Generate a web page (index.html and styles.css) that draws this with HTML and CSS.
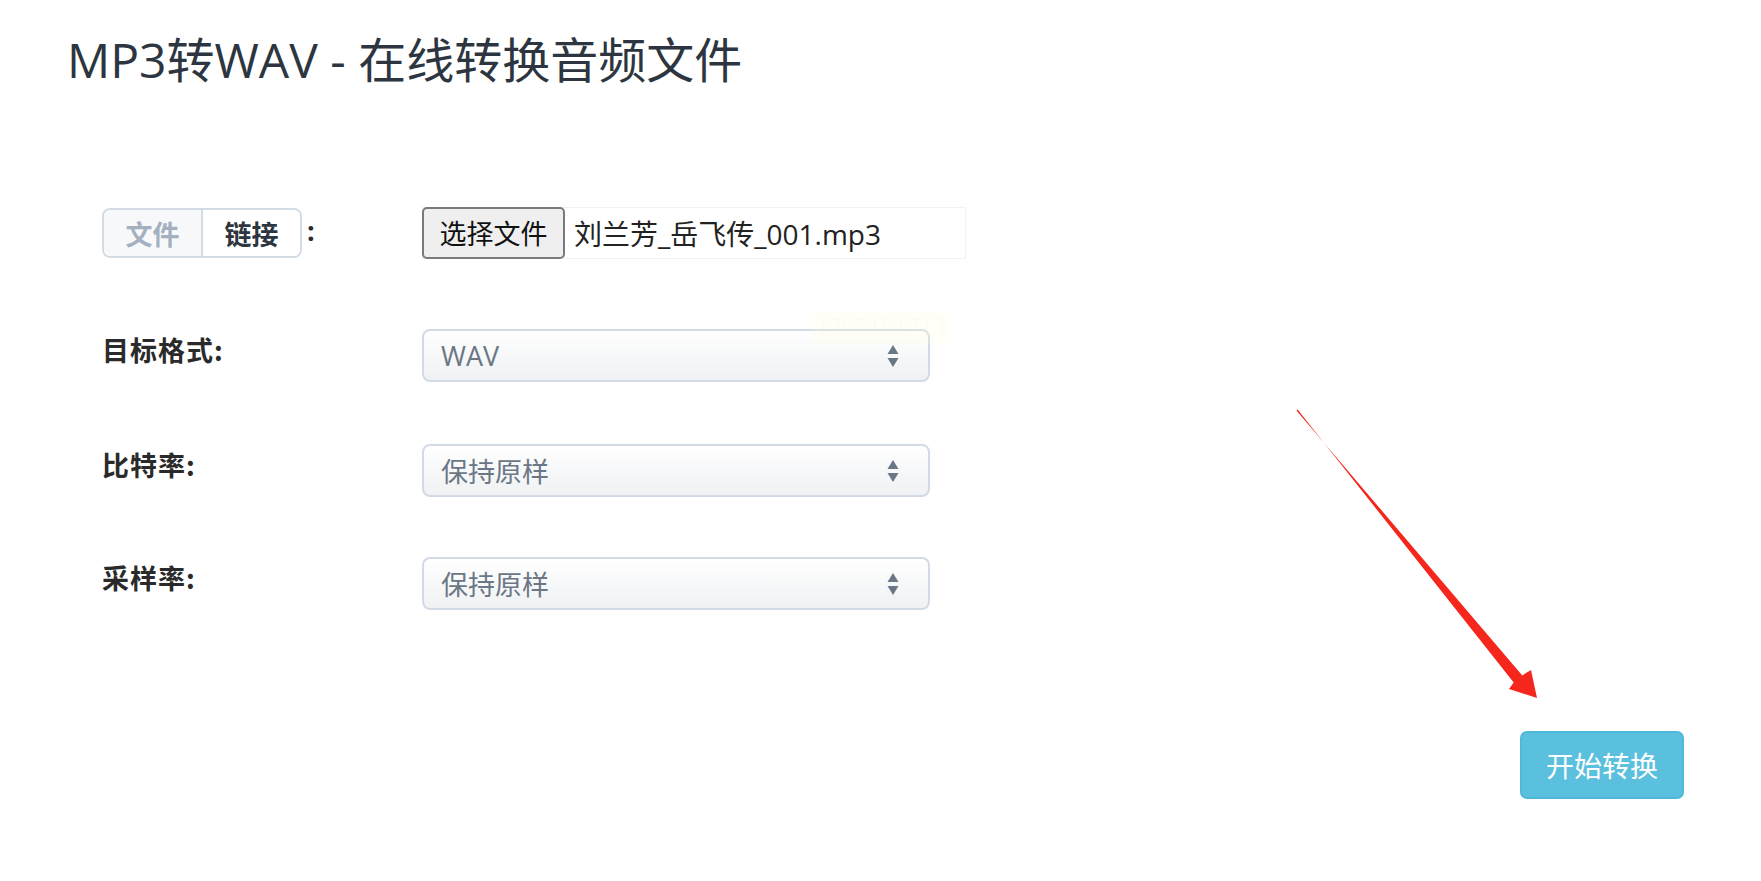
FILE: index.html
```html
<!DOCTYPE html>
<html lang="zh-CN">
<head>
<meta charset="utf-8">
<title>MP3转WAV - 在线转换音频文件</title>
<link rel="stylesheet" href="styles.css">
</head>
<body>
<div class="page">
  <h1 class="title">MP3转WAV - 在线转换音频文件</h1>

  <form class="form">
    <div class="row row-file">
      <div class="label">
        <span class="toggle"><span class="tg tg-off">文件</span><span class="tg tg-on">链接</span></span><span class="colon">:</span>
      </div>
      <div class="control">
        <div class="file">
          <span class="file-btn">选择文件</span><span class="file-name">刘兰芳_岳飞传_001.mp3</span>
        </div>
      </div>
    </div>

    <div class="row row-2">
      <div class="label"><span class="label-text">目标格式:</span></div>
      <div class="control">
        <div class="select"><span class="select-text">WAV</span><span class="caret"><svg width="14" height="24" viewBox="0 0 14 24"><path d="M7 1 L12.5 10 L1.5 10 Z" fill="#6b7785"/><path d="M7 23 L12.5 14 L1.5 14 Z" fill="#6b7785"/></svg></span></div>
      </div>
    </div>

    <div class="row row-3">
      <div class="label"><span class="label-text">比特率:</span></div>
      <div class="control">
        <div class="select"><span class="select-text">保持原样</span><span class="caret"><svg width="14" height="24" viewBox="0 0 14 24"><path d="M7 1 L12.5 10 L1.5 10 Z" fill="#6b7785"/><path d="M7 23 L12.5 14 L1.5 14 Z" fill="#6b7785"/></svg></span></div>
      </div>
    </div>

    <div class="row row-4">
      <div class="label"><span class="label-text">采样率:</span></div>
      <div class="control">
        <div class="select"><span class="select-text">保持原样</span><span class="caret"><svg width="14" height="24" viewBox="0 0 14 24"><path d="M7 1 L12.5 10 L1.5 10 Z" fill="#6b7785"/><path d="M7 23 L12.5 14 L1.5 14 Z" fill="#6b7785"/></svg></span></div>
      </div>
    </div>
  </form>

  <div class="actions">
    <button type="button" class="btn">开始转换</button>
  </div>

  <div class="watermark">1765151713</div>

  <svg class="arrow" width="1761" height="881" viewBox="0 0 1761 881">
    <polygon points="1297.6,409.5 1513.7,682.6 1509,689 1537,698 1531,670 1522.3,675.4 1296.4,410.5" fill="#f5261c"/>
  </svg>
</div>
</body>
</html>
```

FILE: styles.css
```css
html, body {
  margin: 0;
  padding: 0;
  background: #ffffff;
}

body {
  font-family: "Open Sans", "Noto Sans CJK SC", sans-serif;
  color: #333333;
}

.page {
  position: relative;
  width: 1761px;
  height: 881px;
  overflow: hidden;
}

.title {
  margin: 31px 0 0 67px;
  font-size: 48px;
  line-height: 58px;
  font-weight: 400;
  color: #2d3640;
}

.form {
  margin-top: 118px;
  padding-left: 102px;
}

.row {
  display: flex;
  align-items: flex-start;
  height: 53px;
}

.row-2 { margin-top: 69px; }
.row-3 { margin-top: 62px; }
.row-4 { margin-top: 60px; }

.label {
  width: 320px;
  flex: none;
  display: flex;
  align-items: flex-start;
}

.label-text {
  font-family: "Noto Sans CJK SC", sans-serif;
  font-weight: 700;
  font-size: 27px;
  line-height: 36px;
  padding-top: 3px;
  letter-spacing: 1px;
  color: #2a2a2a;
}

.toggle {
  display: flex;
  height: 50px;
  margin-top: 1px;
  border: 2px solid #d3dbe4;
  border-radius: 8px;
  box-sizing: border-box;
  overflow: hidden;
}

.tg {
  display: flex;
  align-items: center;
  justify-content: center;
  width: 97px;
  font-family: "Noto Sans CJK SC", sans-serif;
  font-weight: 700;
  font-size: 27px;
}

.tg-off {
  color: #a4b0bf;
  background: #f6f8fa;
  border-right: 2px solid #d3dbe4;
}

.tg-on {
  color: #2d3640;
  background: #ffffff;
}

.colon {
  font-family: "Open Sans", sans-serif;
  font-weight: 700;
  font-size: 27px;
  line-height: 36px;
  margin-left: 5px;
  padding-top: 6px;
  color: #2a2a2a;
}

.control {
  flex: none;
}

.file {
  display: flex;
  align-items: center;
  width: 544px;
  height: 52px;
  border: 1px solid #f2f2f2;
  box-sizing: border-box;
}

.file-btn {
  display: flex;
  align-items: center;
  justify-content: center;
  height: 52px;
  width: 143px;
  margin: -1px 0 0 -1px;
  box-sizing: border-box;
  border: 2px solid #7a7a7a;
  border-radius: 5px;
  background: #efefef;
  font-family: "Noto Sans CJK SC", sans-serif;
  font-size: 27px;
  color: #111111;
}

.file-name {
  margin-left: 9px;
  font-family: "Open Sans", "Noto Sans CJK SC", sans-serif;
  font-size: 28px;
  color: #222222;
}

.select {
  display: flex;
  align-items: center;
  justify-content: space-between;
  width: 508px;
  height: 53px;
  box-sizing: border-box;
  padding: 0 28px 0 17px;
  border: 2px solid #d2dbe5;
  border-radius: 8px;
  background: linear-gradient(#ffffff, #eff1f3);
}

.select-text {
  font-family: "Open Sans", "Noto Sans CJK SC", sans-serif;
  font-size: 27px;
  color: #6b7785;
}

.caret {
  display: flex;
}

.actions {
  display: flex;
  justify-content: flex-end;
  padding-right: 77px;
  margin-top: 121px;
}

.btn {
  width: 164px;
  height: 68px;
  background: #5bc0de;
  border: 2px solid #4db8d8;
  border-radius: 7px;
  color: #ffffff;
  font-family: "Noto Sans CJK SC", sans-serif;
  font-size: 28px;
  padding: 0;
}

.watermark {
  position: absolute;
  left: 813px;
  top: 311px;
  width: 136px;
  height: 32px;
  background: rgba(255, 255, 210, 0.18);
  color: rgba(240, 240, 225, 0.18);
  font-family: "Liberation Serif", serif;
  font-size: 26px;
  line-height: 32px;
  text-align: center;
}

.arrow {
  position: absolute;
  left: 0;
  top: 0;
  pointer-events: none;
}
```
